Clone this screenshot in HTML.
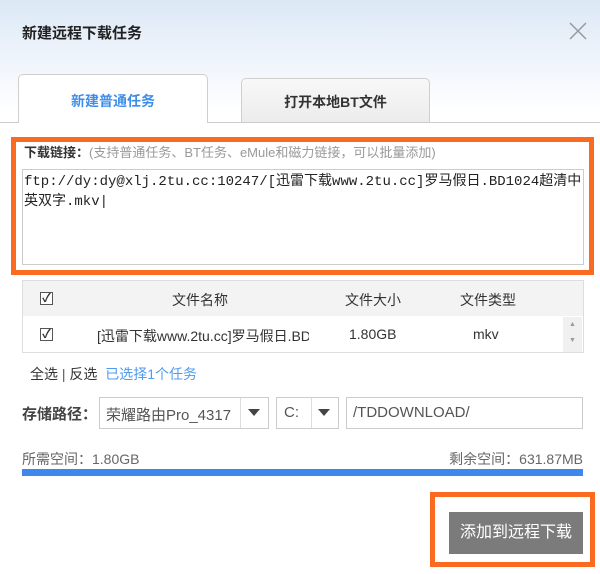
<!DOCTYPE html>
<html><head><meta charset="utf-8"><style>
*{margin:0;padding:0;box-sizing:border-box}
body{width:600px;height:574px;position:relative;background:#fff;font-family:"Liberation Sans","Noto Sans CJK SC",sans-serif;color:#333;overflow:hidden}
.a{position:absolute}
.hdr{left:0;top:0;width:600px;height:123px;background:linear-gradient(#dce8f6,#fff 90%)}
.tab{border:1px solid #cfcfcf;border-bottom:none;border-radius:5px 5px 0 0;font-size:14px;font-weight:bold;text-align:center}
.cb{width:13px;height:13px;border:1px solid #555;background:#fff;font-size:12px;line-height:11px;text-align:center;font-weight:bold}
.sel{border:1px solid #ccc;background:#fff;font-size:15px;color:#555}
</style></head><body>
<div class="a hdr"></div>
<div class="a" style="left:22px;top:22px;font-size:15px;font-weight:bold;color:#222">新建远程下载任务</div>
<svg class="a" style="left:569px;top:22px" width="18" height="18"><path d="M1 1L17 17M17 1L1 17" stroke="#999" stroke-width="1.5"/></svg>
<div class="a" style="left:0;top:122px;width:600px;height:1px;background:#ccc"></div>
<div class="a tab" style="left:18px;top:74px;width:190px;height:49px;background:#fff;color:#3d8ee8;line-height:52px">新建普通任务</div>
<div class="a tab" style="left:241px;top:78px;width:189px;height:44px;background:linear-gradient(#f8f8f8,#ececec);line-height:46px;color:#333">打开本地BT文件</div>
<div class="a" style="left:11px;top:137px;width:583px;height:138px;border:5px solid #fb6a21"></div>
<div class="a" style="left:24px;top:144px;font-size:13px;line-height:18px;color:#999"><b style="color:#333">下载链接：</b>(支持普通任务、BT任务、eMule和磁力链接，可以批量添加)</div>
<div class="a" style="left:22px;top:169px;width:562px;height:96px;border:1px solid #ccc;font-family:'Liberation Mono','Noto Sans CJK SC',monospace;font-size:14px;line-height:20px;padding:2px 1px;color:#222">ftp://dy:dy@xlj.2tu.cc:10247/[迅雷下载www.2tu.cc]罗马假日.BD1024超清中英双字.mkv|</div>
<div class="a" style="left:22px;top:280px;width:562px;height:73px;border:1px solid #ddd;background:#f3f3f3"></div>
<div class="a" style="left:23px;top:316px;width:560px;height:36px;background:#fff"></div>
<div class="a" style="left:563px;top:317px;width:19px;height:35px;background:#f0f0f0;font-size:7px;color:#999;text-align:center;line-height:16px">▲<br>▼</div>
<div class="a cb" style="left:40px;top:292px">✓</div>
<div class="a cb" style="left:40px;top:328px">✓</div>
<div class="a" style="left:172px;top:290px;font-size:14px">文件名称</div>
<div class="a" style="left:345px;top:290px;font-size:14px">文件大小</div>
<div class="a" style="left:460px;top:290px;font-size:14px">文件类型</div>
<div class="a" style="left:97px;top:326px;width:212px;overflow:hidden;white-space:nowrap;font-size:14px">[迅雷下载www.2tu.cc]罗马假日.BD</div>
<div class="a" style="left:349px;top:326px;font-size:14px">1.80GB</div>
<div class="a" style="left:473px;top:326px;font-size:14px">mkv</div>
<div class="a" style="left:30px;top:364px;font-size:14px">全选 <span style="color:#555">|</span> 反选 &nbsp;<span style="color:#4f9bf0">已选择1个任务</span></div>
<div class="a" style="left:22px;top:403px;font-size:15px;font-weight:bold;color:#444">存储路径：</div>
<div class="a sel" style="left:99px;top:397px;width:170px;height:32px;padding:6px 6px;white-space:nowrap">荣耀路由Pro_4317</div>
<div class="a" style="left:240px;top:398px;width:1px;height:30px;background:#ddd"></div>
<svg class="a" style="left:248px;top:409px" width="12" height="8"><path d="M0 0H12L6 7Z" fill="#444"/></svg>
<div class="a sel" style="left:276px;top:397px;width:63px;height:32px;padding:6px 7px">C:</div>
<div class="a" style="left:311px;top:398px;width:1px;height:30px;background:#ddd"></div>
<svg class="a" style="left:318px;top:409px" width="12" height="8"><path d="M0 0H12L6 7Z" fill="#444"/></svg>
<div class="a sel" style="left:346px;top:397px;width:237px;height:32px;padding:6px 6px">/TDDOWNLOAD/</div>
<div class="a" style="left:22px;top:449px;font-size:14px;color:#666">所需空间：1.80GB</div>
<div class="a" style="right:17px;top:449px;font-size:14px;color:#666">剩余空间：631.87MB</div>
<div class="a" style="left:22px;top:469px;width:561px;height:7px;background:#3e87ef"></div>
<div class="a" style="left:430px;top:492px;width:165px;height:75px;border:5px solid #fb6a21"></div>
<div class="a" style="left:449px;top:512px;width:134px;height:42px;background:#7b7b7b;color:#fff;font-size:16px;text-align:center;line-height:42px">添加到远程下载</div>
</body></html>
